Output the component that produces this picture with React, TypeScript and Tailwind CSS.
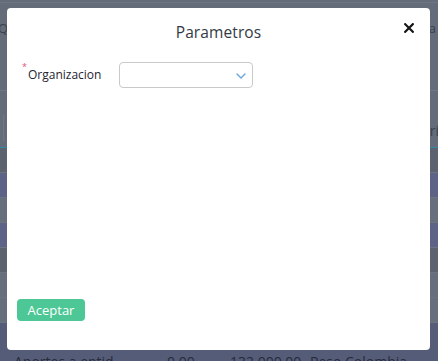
import React from 'react';

const rows = [
  { bg: 'bg-[#5d636e]' },
  { bg: 'bg-[#5c6386]' },
  { bg: 'bg-[#676e7c]' },
  { bg: 'bg-[#5c6386]' },
  { bg: 'bg-[#5d636e]' },
  { bg: 'bg-[#676e7c]' },
  { bg: 'bg-[#676e7c]' },
];

function Chevron() {
  return (
    <svg width="10" height="6" viewBox="0 0 10 6" fill="none" stroke="#6aa6de" strokeWidth="1.4" strokeLinecap="round" strokeLinejoin="round">
      <path d="M1 1l4 4 4-4" />
    </svg>
  );
}

function CloseIcon() {
  return (
    <svg width="10" height="10" viewBox="0 0 10 10" fill="none" stroke="#151515" strokeWidth="2.2" strokeLinecap="square">
      <path d="M1.2 1.2l7.6 7.6M8.8 1.2l-7.6 7.6" />
    </svg>
  );
}

export default function App() {
  return (
    <div className="relative w-[438px] h-[361px] overflow-hidden bg-[#646b79] font-['Open_Sans',sans-serif]">
      {/* dimmed page behind the dialog */}
      <div className="flex flex-col">
        <div className="h-[3px] border-b border-[#6d7482]" />
        <div className="h-[87px] flex items-start justify-between pt-[16px] text-[13px] text-[#3b4150]">
          <span className="-ml-[2px]">Qu</span>
          <span className="mr-[2px]">a</span>
        </div>
        <div className="h-px bg-[#6f7684]" />
        <div className="h-[56px] flex items-end justify-between pb-[6px] text-[14px] text-[#3b4150]">
          <span className="ml-[3px] w-px h-[26px] bg-[#6f7684]" />
          <span className="-mr-[1px]">tri</span>
        </div>
        <div className="h-px bg-[#2f8aa8]" />
        {rows.map((r, i) => (
          <div key={i} className={`h-[25px] ${r.bg} border-b border-[#6c7381]`} />
        ))}
        <div className="h-[40px] bg-[#555c78] flex items-end text-[14px] text-[#262b3b] leading-none">
          <div className="flex translate-y-[6px]">
            <span className="ml-[14px] w-[153px]">Aportes a entid</span>
            <span className="w-[63px]">0.00</span>
            <span className="w-[80px]">132.000,00</span>
            <span>Peso Colombia</span>
          </div>
        </div>
      </div>

      {/* dialog */}
      <div className="absolute left-[7px] top-[8px] w-[423px] h-[342px] bg-white rounded-[4px] flex flex-col">
        <div className="relative h-[48px] flex items-center justify-center pt-[1px]">
          <h2 className="text-[15.5px] text-[#333a45] tracking-[0.1px]">Parametros</h2>
          <button className="absolute right-[16px] top-[15px] leading-none">
            <CloseIcon />
          </button>
        </div>
        <div className="flex items-center pl-[15px] pt-[6px]">
          <div className="w-[97px] flex items-start">
            <span className="text-[#e0557a] text-[9px] leading-none -mt-[4px] mr-[1px]">*</span>
            <span className="text-[12px] text-[#1f2430]">Organizacion</span>
          </div>
          <div className="w-[134px] h-[26px] border border-[#c9c9c9] rounded-[4px] flex items-center justify-end pr-[6px] pt-[2px]">
            <Chevron />
          </div>
        </div>
        <div className="flex-1" />
        <div className="pl-[10px] pb-[29px]">
          <button className="w-[68px] h-[22px] bg-[#4cc795] rounded-[4px] text-white text-[13px] font-medium leading-none">Aceptar</button>
        </div>
      </div>
    </div>
  );
}
